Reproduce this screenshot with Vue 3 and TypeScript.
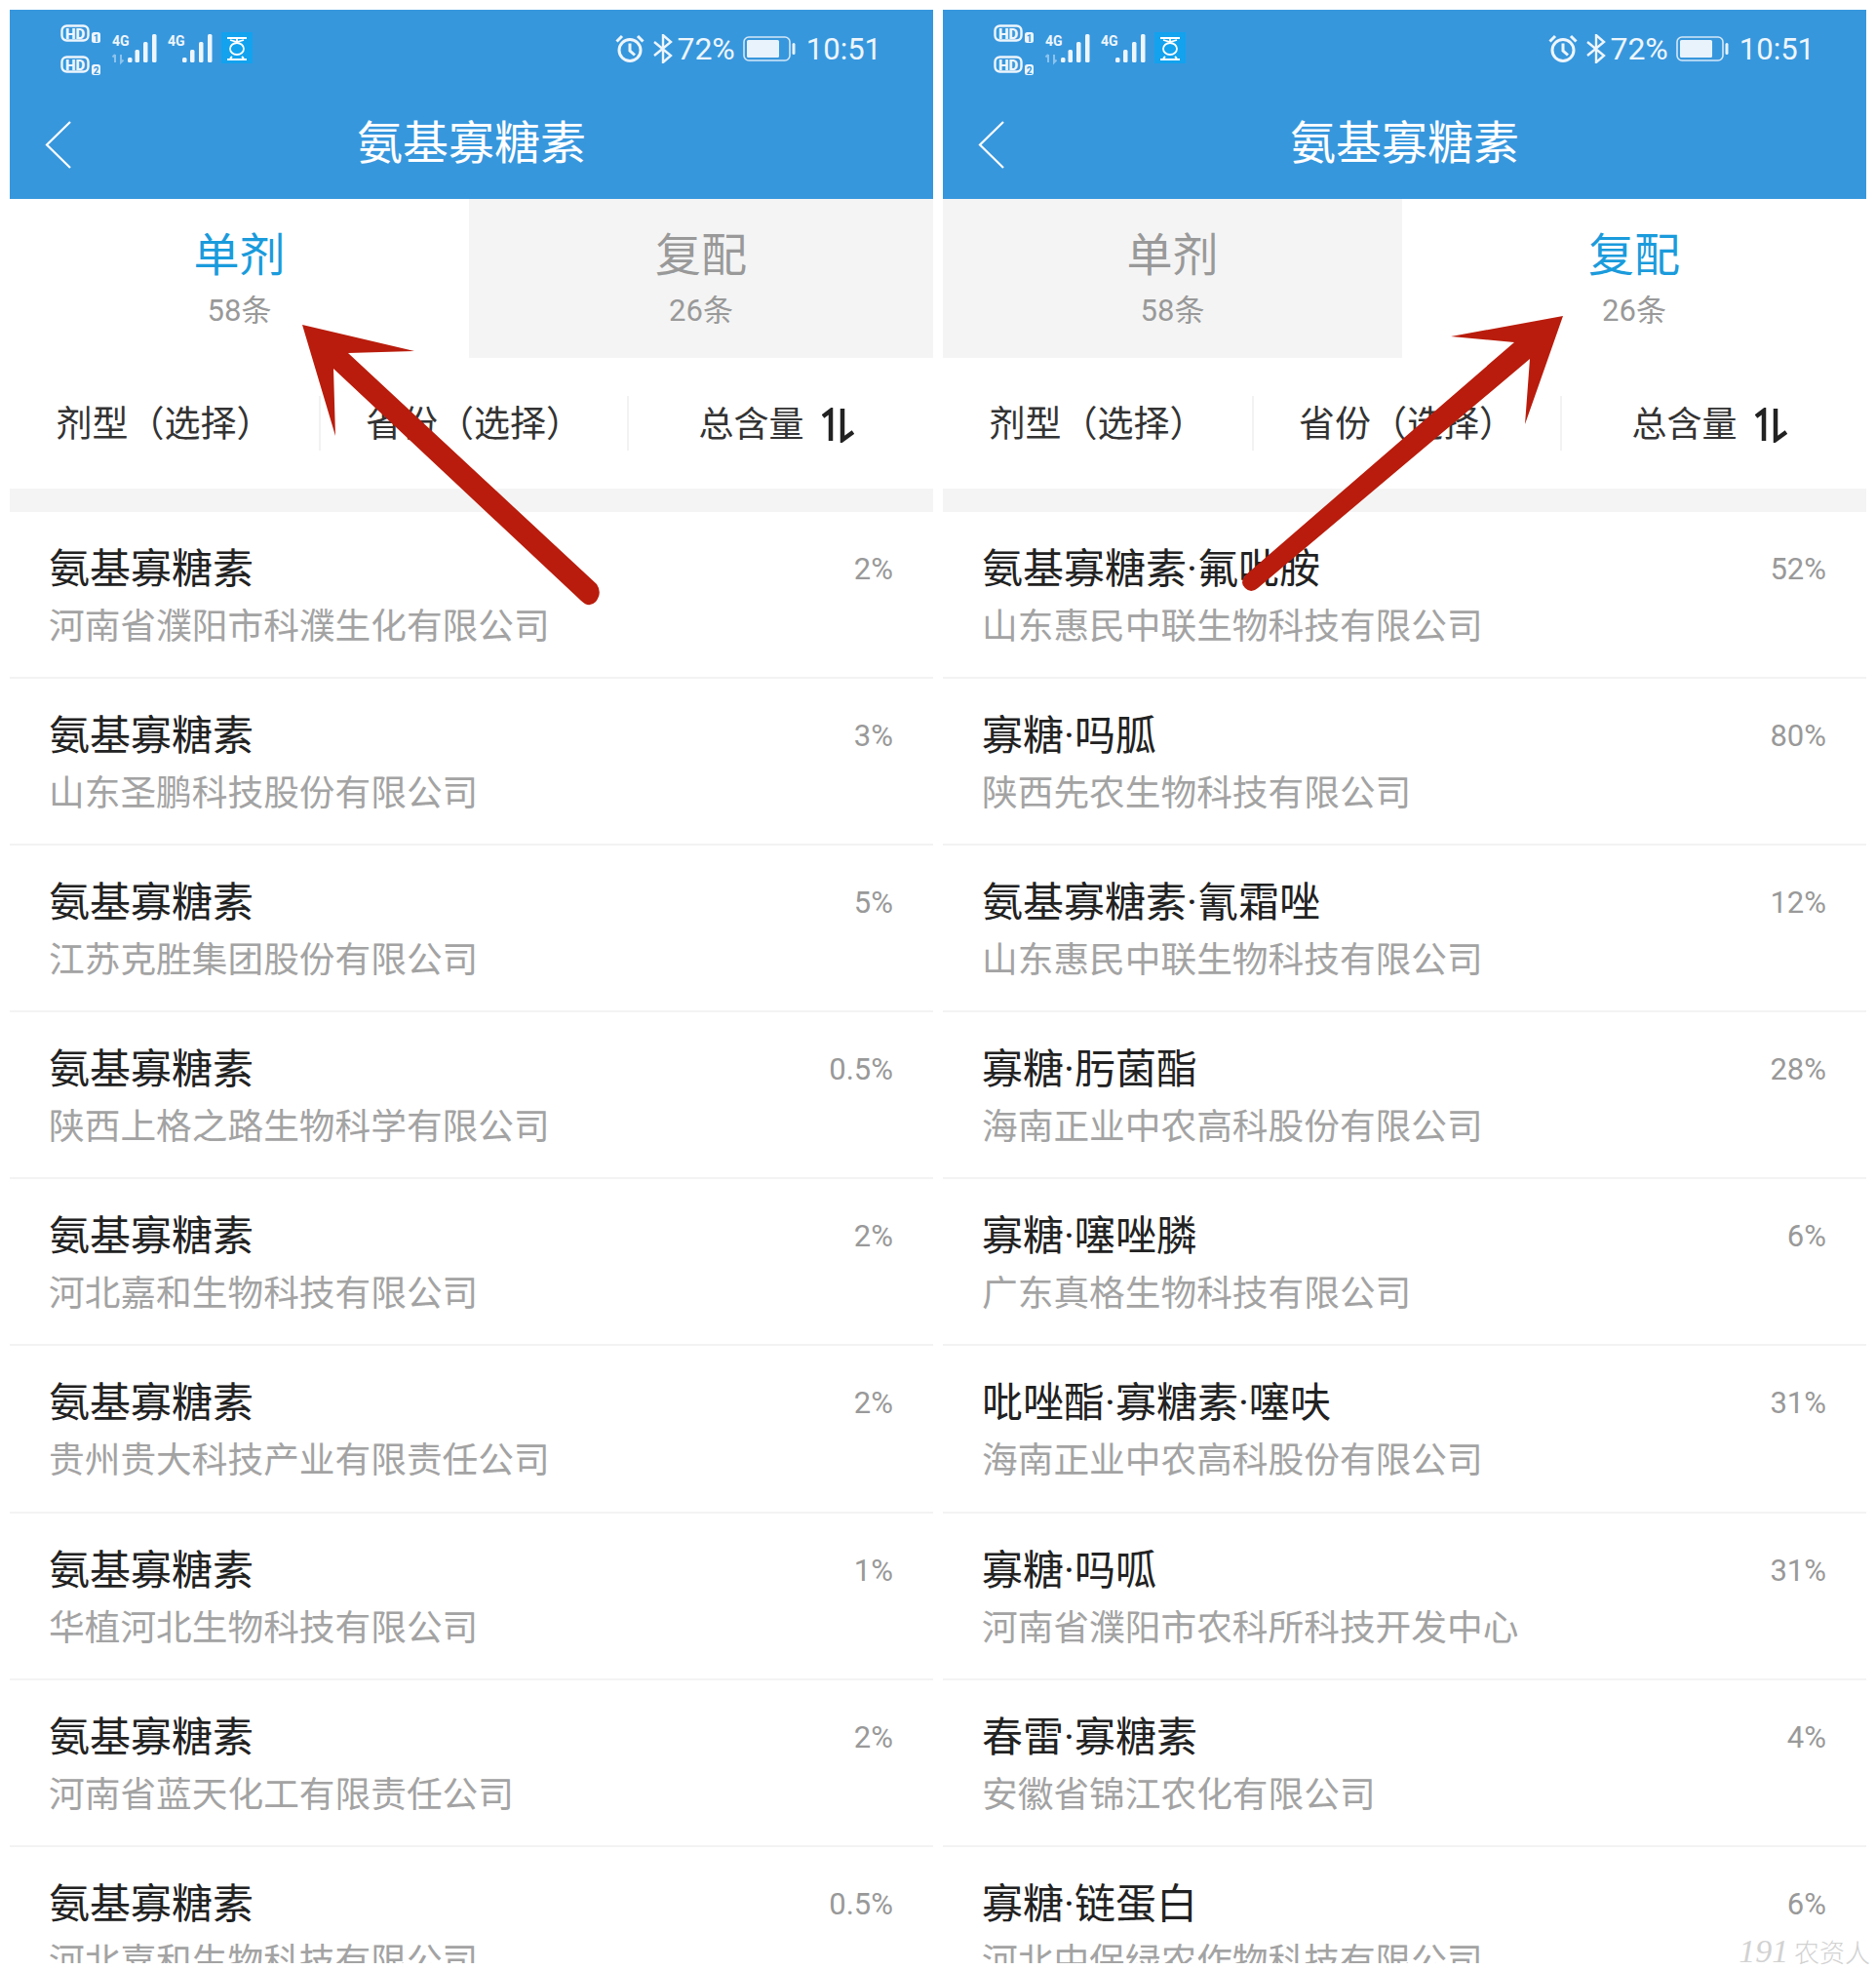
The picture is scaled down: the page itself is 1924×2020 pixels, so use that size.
<template>
  <div class="page">
    <section v-for="panel in panels" :key="panel.active" class="phone">
      <header class="top">
        <div class="status">
          <svg class="net" width="200" height="54" viewBox="0 0 200 54">
            <g fill="none" stroke="#eef6fc" stroke-width="2.4">
              <rect x="1.500" y="1.500" width="27" height="15" rx="5" />
              <rect x="1.500" y="33.500" width="27" height="15" rx="5" />
            </g>
            <g class="hd">
              <text x="15" y="14.500" text-anchor="middle">HD</text>
              <text x="15" y="46.500" text-anchor="middle">HD</text>
            </g>
            <g class="sim" fill="#eef6fc">
              <rect x="32" y="8" width="9" height="11" rx="2.500" />
              <rect x="32" y="41" width="9" height="11" rx="2.500" />
            </g>
            <g class="sim-no">
              <text x="36.500" y="17.500" text-anchor="middle">1</text>
              <text x="36.500" y="50.500" text-anchor="middle">2</text>
            </g>
            <g class="g4">
              <text x="53" y="22">4G</text>
              <text x="110" y="22">4G</text>
            </g>
            <path d="M56 31v8M53.500 33.500 56 31M62 31v8l2.500-2.500" fill="none" stroke="#8cc3ec" stroke-width="2" />
            <g fill="#eef6fc">
              <rect x="69" y="34" width="4.500" height="5" rx="1.500" />
              <rect x="76.500" y="26" width="4.500" height="13" rx="1.500" />
              <rect x="85" y="18" width="4.500" height="21" rx="1.500" />
              <rect x="94" y="10" width="4.500" height="29" rx="1.500" />
              <rect x="125" y="34" width="4.500" height="5" rx="1.500" />
              <rect x="133" y="26" width="4.500" height="13" rx="1.500" />
              <rect x="142" y="18" width="4.500" height="21" rx="1.500" />
              <rect x="151" y="10" width="4.500" height="29" rx="1.500" />
            </g>
            <rect x="165" y="8" width="32" height="32" fill="#12a2ee" />
            <g fill="none" stroke="#fff" stroke-width="1.800">
              <path d="M171 14h20M181 14v4M174 16l7 2 7-2" />
              <ellipse cx="181" cy="25" rx="7" ry="6" />
              <path d="M176 33l-2 2M186 33l2 2M171 36h20" />
            </g>
          </svg>
          <div class="sys">
            <svg width="30" height="30" viewBox="0 0 30 30" fill="none" stroke="#eef6fc" stroke-width="3">
              <circle cx="15" cy="16.500" r="11" />
              <path d="M15 9.500v7.500l5 4.500M1.500 7.500 7 2M28.500 7.500 23 2" />
            </svg>
            <svg class="bt" width="20" height="30" viewBox="0 0 20 30" fill="none" stroke="#eef6fc" stroke-width="2.400">
              <path d="M1 8 18 22 10 29V1l8 7L1 22" />
            </svg>
            <span class="pct">72%</span>
            <svg class="batt" width="54" height="26" viewBox="0 0 54 26">
              <rect x="1" y="1" width="47" height="24" rx="5" fill="none" stroke="#d5e8f7" stroke-width="1.600" />
              <rect x="4" y="4" width="33" height="18" rx="1.500" fill="#e8f3fb" />
              <rect x="50.500" y="7" width="3" height="12" rx="1.500" fill="#e8f3fb" />
            </svg>
            <span class="time">10:51</span>
          </div>
        </div>
        <div class="nav">
          <svg class="back" width="28" height="50" viewBox="0 0 28 50" fill="none" stroke="#fff" stroke-width="2.200">
            <path d="M26 1 2 24.500 26 48" />
          </svg>
          <h1>氨基寡糖素</h1>
        </div>
      </header>

      <div class="tabs">
        <div
          v-for="tab in tabs"
          :key="tab.name"
          class="tab"
          :class="{ active: tab.name === panel.active }"
        >
          <div class="tab-name">{{ tab.name }}</div>
          <div class="tab-count">{{ tab.count }}</div>
        </div>
      </div>

      <div class="filters">
        <div class="filter">剂型（选择）</div>
        <div class="filter">省份（选择）</div>
        <div class="filter sum">
          总含量
          <svg class="sort" width="33" height="36" viewBox="0 0 33 36" fill="none" stroke="#222" stroke-width="4.500">
            <path d="M1 9 9 3V34M21 1V33L32 25" />
          </svg>
        </div>
      </div>

      <div class="band"></div>

      <ul class="list">
        <li v-for="(row, i) in panel.rows" :key="i" class="row">
          <div class="row-main">
            <div class="row-title">{{ row.title }}</div>
            <div class="row-sub">{{ row.company }}</div>
          </div>
          <div class="row-pct">{{ row.pct }}</div>
        </li>
      </ul>
    </section>

    <svg class="arrows" width="1924" height="2020" viewBox="0 0 1924 2020">
      <path d="M310 333 425 360 357 362 612 599Q618 608 611 617 604 624 596 616L342 378 344 447Z" fill="#b91c0c" />
      <path d="M1603 324 1488 345 1553 351 1277 590Q1271 598 1277 603 1283 609 1290 603L1569 368 1564 435Z" fill="#b91c0c" />
    </svg>

    <div class="mark"><i>191</i> 农资人</div>
  </div>
</template>

<script setup lang="ts">
interface Row {
  title: string
  company: string
  pct: string
}

const tabs = [
  { name: '单剂', count: '58条' },
  { name: '复配', count: '26条' }
]

const single: Row[] = [
  ['河南省濮阳市科濮生化有限公司', '2%'],
  ['山东圣鹏科技股份有限公司', '3%'],
  ['江苏克胜集团股份有限公司', '5%'],
  ['陕西上格之路生物科学有限公司', '0.5%'],
  ['河北嘉和生物科技有限公司', '2%'],
  ['贵州贵大科技产业有限责任公司', '2%'],
  ['华植河北生物科技有限公司', '1%'],
  ['河南省蓝天化工有限责任公司', '2%'],
  ['河北嘉和生物科技有限公司', '0.5%']
].map(([company, pct]) => ({ title: '氨基寡糖素', company, pct }))

const mixed: Row[] = [
  { title: '氨基寡糖素·氟吡胺', company: '山东惠民中联生物科技有限公司', pct: '52%' },
  { title: '寡糖·吗胍', company: '陕西先农生物科技有限公司', pct: '80%' },
  { title: '氨基寡糖素·氰霜唑', company: '山东惠民中联生物科技有限公司', pct: '12%' },
  { title: '寡糖·肟菌酯', company: '海南正业中农高科股份有限公司', pct: '28%' },
  { title: '寡糖·噻唑膦', company: '广东真格生物科技有限公司', pct: '6%' },
  { title: '吡唑酯·寡糖素·噻呋', company: '海南正业中农高科股份有限公司', pct: '31%' },
  { title: '寡糖·吗呱', company: '河南省濮阳市农科所科技开发中心', pct: '31%' },
  { title: '春雷·寡糖素', company: '安徽省锦江农化有限公司', pct: '4%' },
  { title: '寡糖·链蛋白', company: '河北中保绿农作物科技有限公司', pct: '6%' }
]

const panels = [
  { active: '单剂', rows: single },
  { active: '复配', rows: mixed }
]
</script>

<style scoped>
.page {
  position: relative;
  width: 1924px;
  height: 2020px;
  box-sizing: border-box;
  padding: 10px 10px 7px;
  display: flex;
  gap: 10px;
  overflow: hidden;
  background: #fff;
  font-family: "Noto Sans CJK SC", sans-serif;
}

.phone {
  width: 947px;
  height: 2003px;
  overflow: hidden;
  display: flex;
  flex-direction: column;
}

.top {
  height: 194px;
  flex: none;
  background: #3797dd;
  color: #fff;
}

.status {
  height: 74px;
  box-sizing: border-box;
  padding: 15px 53px 0 52px;
  display: flex;
  justify-content: space-between;
}

.hd text {
  font: 900 15px "Roboto", sans-serif;
  fill: #eef6fc;
}

.sim-no text {
  font: 700 10px "Roboto", sans-serif;
  fill: #3797dd;
}

.g4 text {
  font: 700 14px "Roboto", sans-serif;
  fill: #eef6fc;
}

.sys {
  display: flex;
  align-items: center;
  height: 40px;
  margin-top: 5px;
  font-family: "Roboto", sans-serif;
  font-size: 31px;
  color: #eef6fc;
}

.bt {
  margin-left: 9px;
}

.pct {
  margin-left: 4px;
  font-size: 32px;
}

.batt {
  margin-left: 8px;
}

.time {
  margin-left: 11px;
}

.nav {
  position: relative;
  height: 118px;
  display: flex;
  align-items: center;
  justify-content: center;
}

.back {
  position: absolute;
  left: 36px;
  top: 40px;
}

.nav h1 {
  margin: 0;
  font-size: 47px;
  font-weight: 400;
  line-height: 60px;
}

.tabs {
  height: 163px;
  flex: none;
  display: flex;
}

.tab {
  flex: 1;
  box-sizing: border-box;
  padding-top: 21px;
  text-align: center;
  background: #f4f4f4;
  color: #999;
}

.tab:first-child {
  flex: none;
  width: 471px;
}

.tab.active {
  background: #fff;
}

.tab.active .tab-name {
  color: #1a9bdc;
}

.tab-name {
  font-size: 47px;
  line-height: 66px;
}

.tab-count {
  margin-top: 6px;
  font-family: "Roboto", "Noto Sans CJK SC", sans-serif;
  font-size: 31px;
  line-height: 44px;
}

.filters {
  height: 134px;
  flex: none;
  display: flex;
  align-items: center;
}

.filter {
  flex: 1;
  height: 56px;
  box-sizing: border-box;
  padding-bottom: 4px;
  display: flex;
  align-items: center;
  justify-content: center;
  font-size: 37px;
  color: #333;
  border-left: 2px solid #f2f2f2;
}

.filter:first-child {
  flex: none;
  width: 317px;
  border-left: 0;
}

.filter.sum {
  flex: none;
  width: 314px;
  padding-right: 10px;
  font-size: 36px;
}

.sort {
  margin: 8px 0 0 18px;
}

.band {
  height: 24px;
  flex: none;
  background: #f4f4f4;
}

.list {
  margin: 0;
  padding: 0;
  list-style: none;
}

.row {
  height: 171.100px;
  box-sizing: border-box;
  padding: 31px 41px 0 40px;
  display: flex;
  justify-content: space-between;
  border-bottom: 2px solid #f3f3f3;
}

.row-title {
  font-family: "Roboto", "Noto Sans CJK SC", sans-serif;
  font-size: 42px;
  line-height: 56px;
  color: #222;
}

.row-sub {
  margin-top: 2px;
  font-size: 36.700px;
  line-height: 50px;
  color: #a3a3a3;
}

.row-pct {
  font-family: "Roboto", sans-serif;
  font-size: 31px;
  line-height: 56px;
  color: #999;
}

.arrows {
  position: absolute;
  left: 0;
  top: 0;
  pointer-events: none;
}

.mark {
  position: absolute;
  right: 6px;
  bottom: 2px;
  font-size: 26px;
  font-weight: 300;
  line-height: 34px;
  color: #d2d2d2;
}

.mark i {
  font-family: "Liberation Serif", serif;
  font-size: 34px;
}
</style>

<style>
body {
  background: #fff;
}
</style>
